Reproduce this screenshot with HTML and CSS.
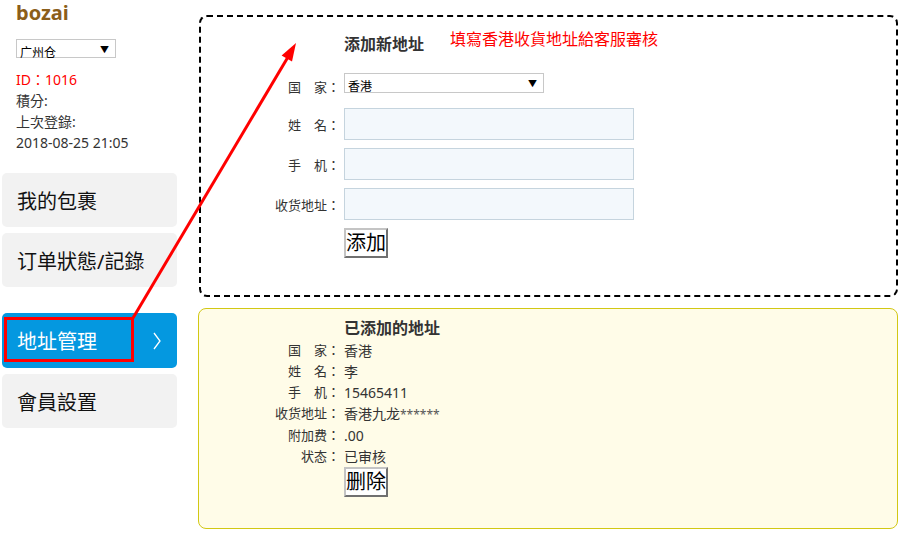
FILE: index.html
```html
<!DOCTYPE html>
<html lang="zh-TW">
<head>
    <meta charset="UTF-8">
    <meta name="viewport" content="width=device-width, initial-scale=1.0">
    <title>地址管理</title>
    <link rel="stylesheet" href="styles.css">
</head>
<body>
<div class="page">
    <aside class="sidebar">
        <div class="user">
            <div class="name">bozai</div>
            <div class="select-box small">
                <select><option>广州仓</option></select>
            </div>
            <p class="uid">ID：1016</p>
            <p>積分:</p>
            <p>上次登錄:</p>
            <p>2018-08-25 21:05</p>
        </div>
        <ul class="menu">
            <li>我的包裹</li>
            <li>订单狀態/記錄</li>
            <li class="active">地址管理
                <svg class="chevron" width="8" height="18" viewBox="0 0 8 18"><polyline points="1,1 7,9 1,17" fill="none" stroke="#fff" stroke-width="1.3"/></svg>
            </li>
            <li>會員設置</li>
        </ul>
    </aside>

    <main class="content">
        <section class="add-box">
            <form class="form-grid">
                <span></span>
                <div class="title-row">
                    <h3>添加新地址</h3>
                    <span class="note">填寫香港收貨地址給客服審核</span>
                </div>

                <label>国　家：</label>
                <div class="select-box wide">
                    <select><option>香港</option></select>
                </div>

                <label>姓　名：</label>
                <input type="text">

                <label>手　机：</label>
                <input type="text">

                <label>收货地址：</label>
                <input type="text">

                <span></span>
                <div><button type="button" class="btn">添加</button></div>
            </form>
        </section>

        <section class="list-box">
            <div class="info-grid">
                <span></span>
                <h3>已添加的地址</h3>

                <span class="key">国　家：</span><span>香港</span>
                <span class="key">姓　名：</span><span>李</span>
                <span class="key">手　机：</span><span>15465411</span>
                <span class="key">收货地址：</span><span>香港九龙<span class="stars">******</span></span>
                <span class="key">附加费：</span><span>.00</span>
                <span class="key">状态：</span><span>已审核</span>

                <span></span>
                <div><button type="button" class="btn">删除</button></div>
            </div>
        </section>
    </main>

    <!-- annotation -->
    <div class="highlight"></div>
    <svg class="arrow" width="909" height="537" viewBox="0 0 909 537">
        <line x1="133" y1="318" x2="288" y2="57" stroke="#f00" stroke-width="3"/>
        <polygon points="296,43 292,61.5 281.6,55.4" fill="#f00"/>
    </svg>
</div>
</body>
</html>
```

FILE: styles.css
```css
body{
    margin: 0;
    background-color: white;
    font-family: "Noto Sans", "Noto Sans CJK TC", sans-serif;
    color: #333;
}
.page{
    position: relative;
    display: flex;
    width: 909px;
    height: 537px;
    overflow: hidden;
}
.sidebar{
    width: 175px;
    margin-left: 2px;
    margin-right: 21px;
}
.user{
    padding: 1px 0 0 14px;
}
.name{
    font-size: 20px;
    font-weight: bold;
    line-height: 24px;
    color: #8b5e1a;
}
.user p{
    margin: 0;
    font-size: 14px;
    line-height: 21px;
}
.user .uid{
    margin-top: 11px;
    color: red;
}
.select-box{
    position: relative;
    border: 1px solid #c8c8c8;
    box-sizing: border-box;
    background: white;
}
.select-box select{
    appearance: none;
    -webkit-appearance: none;
    border: 0;
    background: transparent;
    width: 100%;
    height: 100%;
    font-family: "Noto Sans", "Noto Sans CJK SC", sans-serif;
    font-size: 12px;
    color: #000;
    padding: 0 3px;
    outline: none;
}
.select-box::after{
    content: "▼";
    position: absolute;
    right: 6px;
    top: 50%;
    transform: translateY(-50%);
    font-size: 9px;
    color: #000;
    pointer-events: none;
}
.select-box.small{
    width: 100px;
    height: 19px;
    margin-top: 14px;
}
.select-box.wide{
    width: 200px;
    height: 20px;
}
.menu{
    list-style: none;
    margin: 20px 0 0 0;
    padding: 0;
}
.menu li{
    display: flex;
    align-items: center;
    justify-content: space-between;
    height: 54px;
    margin-bottom: 6px;
    padding: 0 15px 0 15px;
    border-radius: 5px;
    background-color: #f2f2f2;
    font-size: 20px;
    color: #111;
}
.menu li.active{
    margin-top: 26px;
    height: 55px;
    background-color: #0498e0;
    color: white;
}
.chevron{
    margin-right: 1px;
}
.content{
    width: 700px;
    padding-top: 15px;
}
.add-box{
    margin-left: 1px;
    height: 282px;
    border: 2px dashed #000;
    border-radius: 8px;
    box-sizing: border-box;
}
.form-grid{
    display: grid;
    grid-template-columns: 100px 290px;
    column-gap: 4px;
    row-gap: 8px;
    padding: 11px 0 0 39px;
    margin: 0;
}
.form-grid label{
    text-align: right;
    font-size: 13px;
    align-self: center;
}
.title-row{
    display: flex;
    align-items: flex-start;
    gap: 26px;
    white-space: nowrap;
    margin-bottom: 10px;
}
.title-row h3{
    margin: 5px 0 0 0;
    font-size: 16px;
    line-height: 22px;
}
.note{
    font-size: 16px;
    line-height: 22px;
    color: red;
}
.form-grid .select-box{
    margin-bottom: 7px;
}
.form-grid input{
    height: 32px;
    box-sizing: border-box;
    border: 1px solid #c5d4de;
    background-color: #f3f8fc;
    margin: 0;
}
.btn{
    font-family: "Noto Sans", "Noto Sans CJK SC", sans-serif;
    font-size: 20px;
    line-height: 26px;
    padding: 0;
    background: white;
    color: #000;
    border: 2px outset #c4c4c4;
    border-radius: 0;
}
.list-box{
    margin-top: 11px;
    height: 221px;
    border: 1px solid #d2c814;
    border-radius: 8px;
    background-color: #fffce8;
    box-sizing: border-box;
}
.info-grid{
    display: grid;
    grid-template-columns: 100px 1fr;
    column-gap: 4px;
    padding: 8px 0 0 41px;
    font-size: 14px;
    line-height: 21px;
}
.info-grid h3{
    margin: 0 0 1px 0;
    font-size: 16px;
    line-height: 22px;
}
.info-grid .key{
    text-align: right;
    font-size: 13px;
}
.stars{
    font-size: 12px;
    color: #555;
}
.highlight{
    position: absolute;
    left: 4px;
    top: 317px;
    width: 130px;
    height: 45px;
    border: 3px solid red;
    box-sizing: border-box;
}
.arrow{
    position: absolute;
    left: 0;
    top: 0;
    pointer-events: none;
}
```
